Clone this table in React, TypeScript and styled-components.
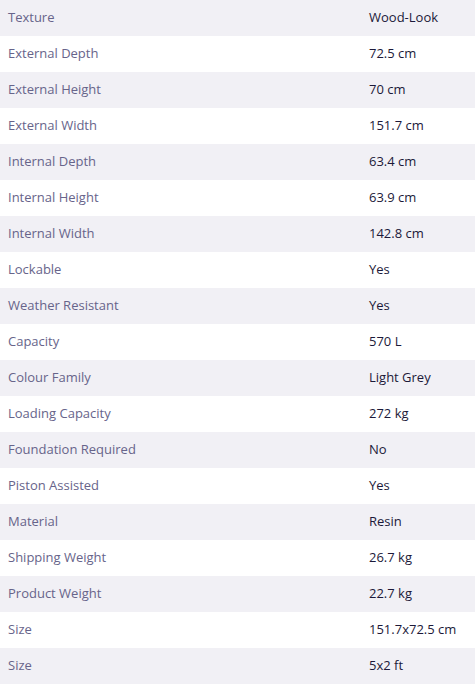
import styled, { createGlobalStyle } from "styled-components";

const GlobalStyle = createGlobalStyle`
    body {
        margin: 0;
        background: #ffffff;
        font-family: "Open Sans", "Noto Sans", sans-serif;
    }
`;

const Table = styled.div`
    width: 475px;
    display: flex;
    flex-direction: column;
`;

const Row = styled.div<{ $shaded: boolean }>`
    display: grid;
    grid-template-columns: 361px 1fr;
    align-items: center;
    box-sizing: border-box;
    height: 36px;
    padding: 0 8px 2px;
    background-color: ${(props) => (props.$shaded ? "#f1f0f5" : "#ffffff")};
    font-size: 13px;
    font-weight: 500;
    line-height: 16px;
`;

const Label = styled.span`
    color: #67648a;
`;

const Value = styled.span`
    color: #1c1939;
`;

const specs: [string, string][] = [
    ["Texture", "Wood-Look"],
    ["External Depth", "72.5 cm"],
    ["External Height", "70 cm"],
    ["External Width", "151.7 cm"],
    ["Internal Depth", "63.4 cm"],
    ["Internal Height", "63.9 cm"],
    ["Internal Width", "142.8 cm"],
    ["Lockable", "Yes"],
    ["Weather Resistant", "Yes"],
    ["Capacity", "570 L"],
    ["Colour Family", "Light Grey"],
    ["Loading Capacity", "272 kg"],
    ["Foundation Required", "No"],
    ["Piston Assisted", "Yes"],
    ["Material", "Resin"],
    ["Shipping Weight", "26.7 kg"],
    ["Product Weight", "22.7 kg"],
    ["Size", "151.7x72.5 cm"],
    ["Size", "5x2 ft"],
];

export default function App() {
    return (
        <>
            <GlobalStyle />
            <Table>
                {specs.map(([label, value], i) => (
                    <Row key={i} $shaded={i % 2 === 0}>
                        <Label>{label}</Label>
                        <Value>{value}</Value>
                    </Row>
                ))}
            </Table>
        </>
    );
}
